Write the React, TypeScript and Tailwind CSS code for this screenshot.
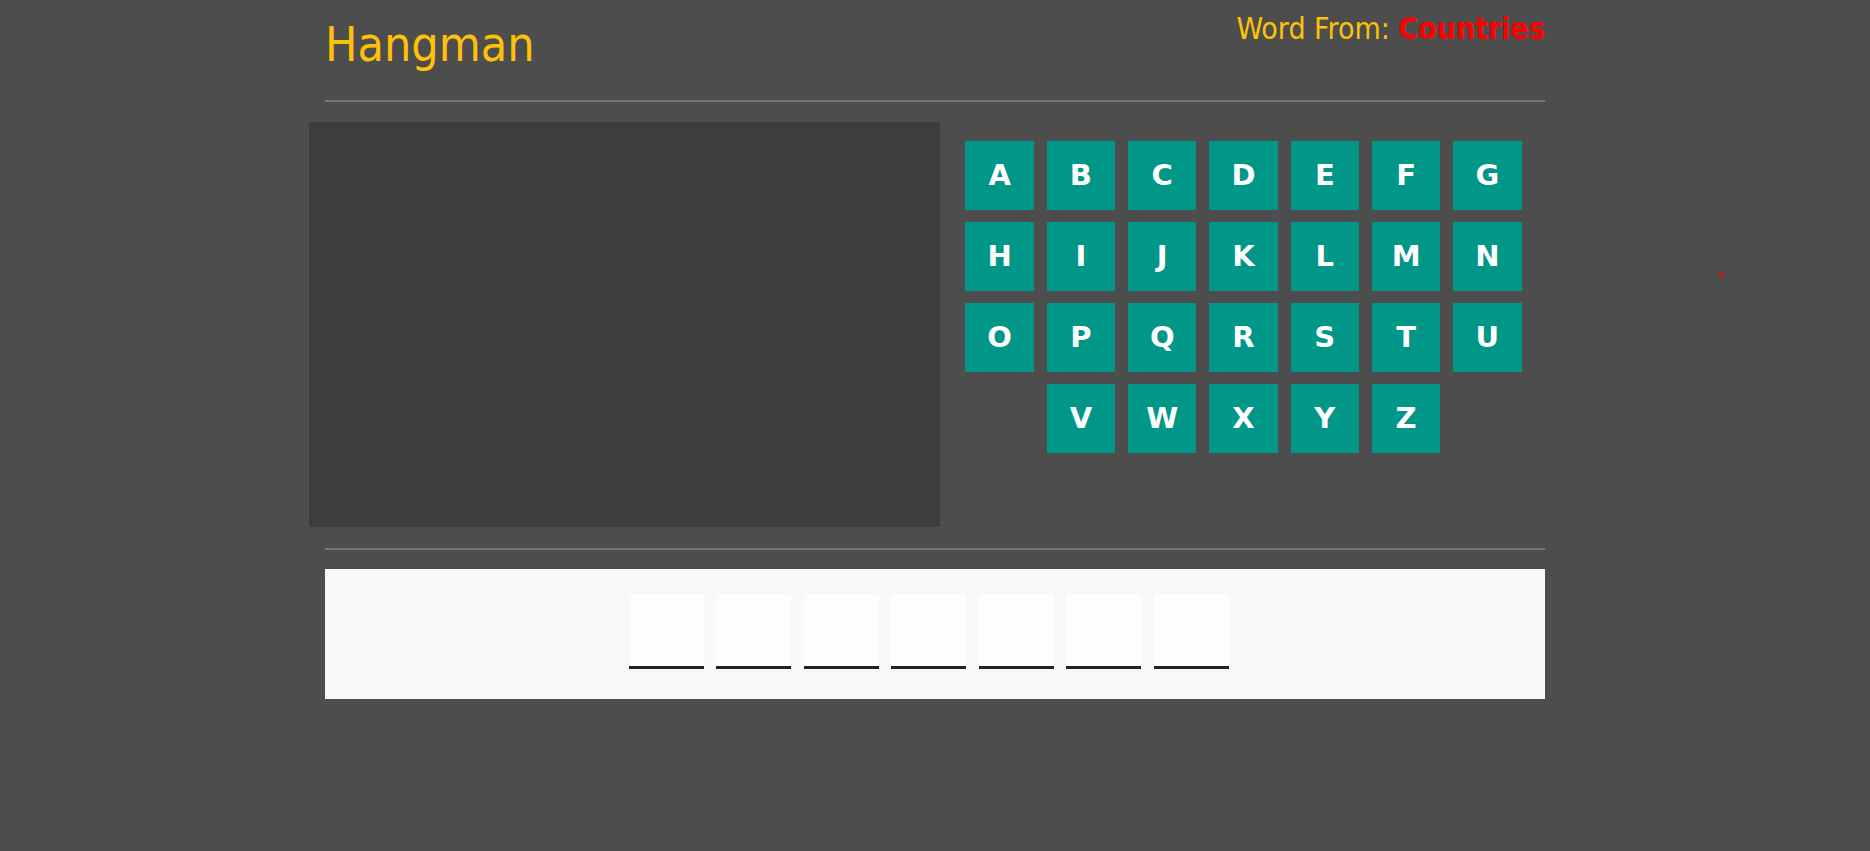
import React from 'react';

const LETTER_ROWS = ['ABCDEFG', 'HIJKLMN', 'OPQRSTU', 'VWXYZ'];
const WORD_LENGTH = 7;

const font = { fontFamily: '"DejaVu Sans Condensed", "DejaVu Sans", sans-serif' };

const LetterButton: React.FC<{ letter: string }> = ({ letter }) => (
  <button className="w-[68.5px] h-[69px] bg-[#009688] text-white font-bold text-[29px] flex items-center justify-center font-['DejaVu_Sans',sans-serif]">
    {letter}
  </button>
);

const App: React.FC = () => {
  const letters = LETTER_ROWS.join('').split('');

  return (
    <div className="min-h-screen bg-[#4d4d4d] relative" style={font}>
      <div className="w-[1220px] mx-auto">
        {/* Header */}
        <div className="flex justify-between items-start h-[100px]">
          <h1 className="text-[#ffc107] text-[48px] leading-[60px] pt-[14px]">Hangman</h1>
          <div className="text-[#ffc107] text-[30px] leading-[34px] pt-[12px]">
            Word From: <span className="text-[#ff0000] font-bold">Countries</span>
          </div>
        </div>
        <div className="h-[2px] bg-[#767676]" />

        {/* Board */}
        <div className="flex ml-[-16px] mt-[20px]">
          <div className="w-[631px] h-[405px] bg-[#3d3d3d]" />
          <div className="ml-[25px] mt-[19px] w-[557px] flex flex-wrap justify-center gap-x-[12.8px] gap-y-[12px] content-start">
            {letters.map(letter => (
              <LetterButton key={letter} letter={letter} />
            ))}
          </div>
        </div>

        <div className="h-[2px] bg-[#767676] mt-[21px]" />

        {/* Word slots */}
        <div className="mt-[19px] h-[130px] bg-[#f8f8f8] pt-[25px] flex justify-center">
          <div className="flex">
            {Array.from({ length: WORD_LENGTH }).map((_, i) => (
              <div
                key={i}
                className="w-[75px] h-[75px] mr-[12.5px] bg-[#fdfdfd] border-b-[3px] border-[#222222]"
              />
            ))}
          </div>
        </div>
      </div>

      <span className="absolute left-[1719px] top-[273px] w-[4px] h-[4px] rounded-full bg-[#ff0000]" />
    </div>
  );
};

export default App;
